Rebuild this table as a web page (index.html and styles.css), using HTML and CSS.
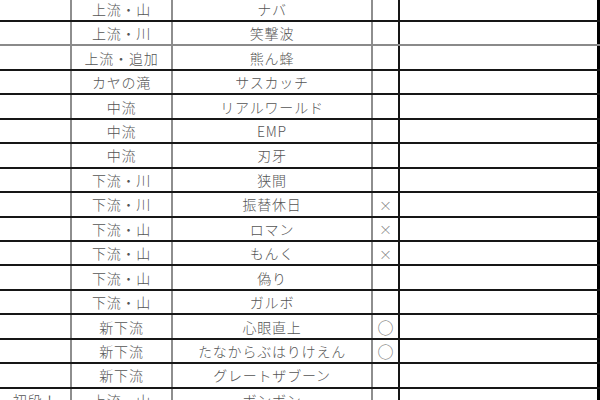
FILE: index.html
```html
<!DOCTYPE html>
<html lang="ja">
<head>
<meta charset="utf-8">
<link rel="stylesheet" href="styles.css">
</head>
<body>
<div class="sheet">
  <div class="row"><div class="c c1"></div><div class="c c2">上流・山</div><div class="c c3">ナバ</div><div class="c c4"></div><div class="c c5"></div></div>
  <div class="row gray"><div class="c c1"></div><div class="c c2">上流・川</div><div class="c c3">笑撃波</div><div class="c c4"></div><div class="c c5"></div></div>
  <div class="row"><div class="c c1"></div><div class="c c2">上流・追加</div><div class="c c3">熊ん蜂</div><div class="c c4"></div><div class="c c5"></div></div>
  <div class="row"><div class="c c1"></div><div class="c c2">カヤの滝</div><div class="c c3">サスカッチ</div><div class="c c4"></div><div class="c c5"></div></div>
  <div class="row"><div class="c c1"></div><div class="c c2">中流</div><div class="c c3">リアルワールド</div><div class="c c4"></div><div class="c c5"></div></div>
  <div class="row"><div class="c c1"></div><div class="c c2">中流</div><div class="c c3">EMP</div><div class="c c4"></div><div class="c c5"></div></div>
  <div class="row"><div class="c c1"></div><div class="c c2">中流</div><div class="c c3">刃牙</div><div class="c c4"></div><div class="c c5"></div></div>
  <div class="row"><div class="c c1"></div><div class="c c2">下流・川</div><div class="c c3">狭間</div><div class="c c4"></div><div class="c c5"></div></div>
  <div class="row"><div class="c c1"></div><div class="c c2">下流・川</div><div class="c c3">振替休日</div><div class="c c4 mark">×</div><div class="c c5"></div></div>
  <div class="row"><div class="c c1"></div><div class="c c2">下流・山</div><div class="c c3">ロマン</div><div class="c c4 mark">×</div><div class="c c5"></div></div>
  <div class="row"><div class="c c1"></div><div class="c c2">下流・山</div><div class="c c3">もんく</div><div class="c c4 mark">×</div><div class="c c5"></div></div>
  <div class="row"><div class="c c1"></div><div class="c c2">下流・山</div><div class="c c3">偽り</div><div class="c c4"></div><div class="c c5"></div></div>
  <div class="row"><div class="c c1"></div><div class="c c2">下流・山</div><div class="c c3">ガルボ</div><div class="c c4"></div><div class="c c5"></div></div>
  <div class="row"><div class="c c1"></div><div class="c c2">新下流</div><div class="c c3">心眼直上</div><div class="c c4 mark circle">○</div><div class="c c5"></div></div>
  <div class="row"><div class="c c1"></div><div class="c c2">新下流</div><div class="c c3">たなからぶはりけえん</div><div class="c c4 mark circle">○</div><div class="c c5"></div></div>
  <div class="row"><div class="c c1"></div><div class="c c2">新下流</div><div class="c c3">グレートザブーン</div><div class="c c4"></div><div class="c c5"></div></div>
  <div class="row"><div class="c c1">初段！</div><div class="c c2">上流・山</div><div class="c c3">ボンボン</div><div class="c c4"></div><div class="c c5"></div></div>
</div>
</body>
</html>
```

FILE: styles.css
```css
html, body {
  margin: 0;
  padding: 0;
  background: #ffffff;
  overflow: hidden;
}
.sheet {
  margin-top: -2.4px;
  width: 600px;
  font-family: "Noto Sans CJK JP", "Noto Sans", sans-serif;
  font-size: 14px;
  font-weight: 300;
  letter-spacing: 0.8px;
  color: #555555;
}
.row {
  display: grid;
  grid-template-columns: 72px 101px 200px 27px 200px;
  height: 24.44px;
  box-sizing: border-box;
  border-bottom: 2px solid #161616;
}
.row.gray {
  border-bottom-color: #8a8a8a;
}
.c {
  box-sizing: border-box;
  display: flex;
  align-items: center;
  justify-content: center;
  white-space: nowrap;
  line-height: 1;
}
.c1, .c2, .c3 {
  border-right: 2px solid #8e8e8e;
}
.c4 {
  border-right: 2px solid #161616;
}
.c5 {
  border-right: 3px solid #000000;
}
.mark {
  font-size: 13px;
  letter-spacing: 0;
  color: #7a7a7a;
}
.mark.circle {
  font-size: 16px;
  color: #666666;
}
```
